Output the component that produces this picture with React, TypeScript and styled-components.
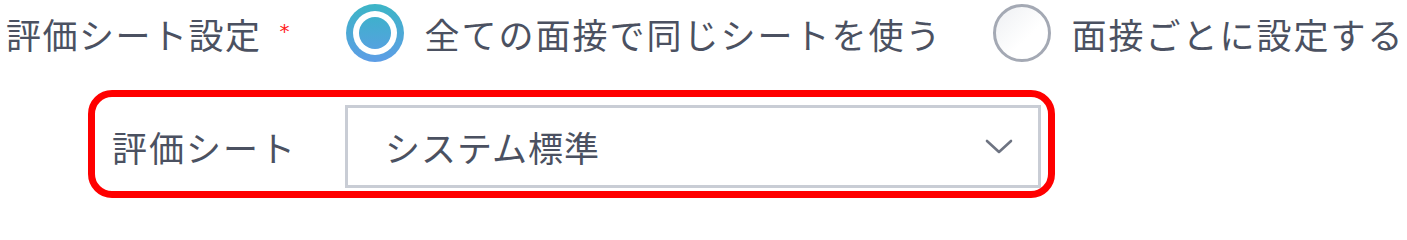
import React from 'react';
import styled, {createGlobalStyle} from "styled-components";

const GlobalStyle = createGlobalStyle`
    body {
        margin: 0;
        background: #ffffff;
        font-family: "Noto Sans CJK JP", "Noto Sans", sans-serif;
        color: #4b5161;
    }
`

export default function App() {
   return (
      <>
         <GlobalStyle/>
         <StyledSetting>
            <TopRow>
               <RowLabel>評価シート設定</RowLabel>
               <Required>*</Required>
               <RadioGroup>
                  <RadioItem>
                     <Radio checked><RadioDot/></Radio>
                     <RadioText>全ての面接で同じシートを使う</RadioText>
                  </RadioItem>
                  <RadioItem>
                     <Radio/>
                     <RadioText>面接ごとに設定する</RadioText>
                  </RadioItem>
               </RadioGroup>
            </TopRow>

            <Highlight>
               <FieldLabel>評価シート</FieldLabel>
               <Select>
                  <SelectValue>システム標準</SelectValue>
                  <svg width="28" height="16" viewBox="0 0 28 16">
                     <path d="M2 2 L14 13 L26 2" fill="none" stroke="#6e7482" strokeWidth="2.6" strokeLinecap="round" strokeLinejoin="round"/>
                  </svg>
               </Select>
            </Highlight>
         </StyledSetting>
      </>
   );
}

const StyledSetting = styled.section`
    width: 1407px;
    height: 203px;
    overflow: hidden;
    display: flex;
    flex-direction: column;
`
const TopRow = styled.div`
    height: 66px;
    display: flex;
    align-items: center;
    padding-left: 6px;
    white-space: nowrap;
`
const RowLabel = styled.span`
    flex-shrink: 0;
    font-size: 35px;
    letter-spacing: 1.5px;
    line-height: 1;
`
const Required = styled.span`
    flex-shrink: 0;
    color: #ff1a1a;
    font-size: 20px;
    line-height: 1;
    margin: -4px 0 0 18px;
    font-family: "DejaVu Sans", sans-serif;
`
const RadioGroup = styled.div`
    flex-shrink: 0;
    display: flex;
    align-items: center;
    gap: 50px;
    margin-left: 56px;
`
const RadioItem = styled.label`
    flex-shrink: 0;
    display: flex;
    align-items: center;
    gap: 21px;
`
const Radio = styled.span<{ checked?: boolean }>`
    flex-shrink: 0;
    width: 58px;
    height: 58px;
    box-sizing: border-box;
    border-radius: 50%;
    display: flex;
    align-items: center;
    justify-content: center;
    border: ${p => p.checked ? "7px solid transparent" : "3px solid #a4a9b4"};
    background: ${p => p.checked
            ? "linear-gradient(#fff, #fff) padding-box, linear-gradient(#3cb5c6, #5d9de6) border-box"
            : "linear-gradient(135deg, #eef0f3, #ffffff 60%)"};
`
const RadioDot = styled.span`
    width: 32px;
    height: 32px;
    border-radius: 50%;
    background: linear-gradient(#3fb0cc, #55a2df);
`
const RadioText = styled.span`
    font-size: 35px;
    letter-spacing: 2px;
    line-height: 1;
`
const Highlight = styled.div`
    margin: 24px 0 0 88px;
    width: 967px;
    height: 108px;
    box-sizing: border-box;
    border: 7px solid #ff0000;
    border-radius: 24px;
    padding: 8px 7px 3px 17px;
    display: flex;
    align-items: stretch;
`
const FieldLabel = styled.span`
    width: 233px;
    display: flex;
    align-items: center;
    font-size: 35px;
    letter-spacing: 2px;
`
const Select = styled.div`
    flex: 1;
    box-sizing: border-box;
    border: 3px solid #c9cdd5;
    display: flex;
    align-items: center;
    justify-content: space-between;
    padding: 0 25px 0 37px;
`
const SelectValue = styled.span`
    font-size: 35px;
    letter-spacing: 1px;
`
